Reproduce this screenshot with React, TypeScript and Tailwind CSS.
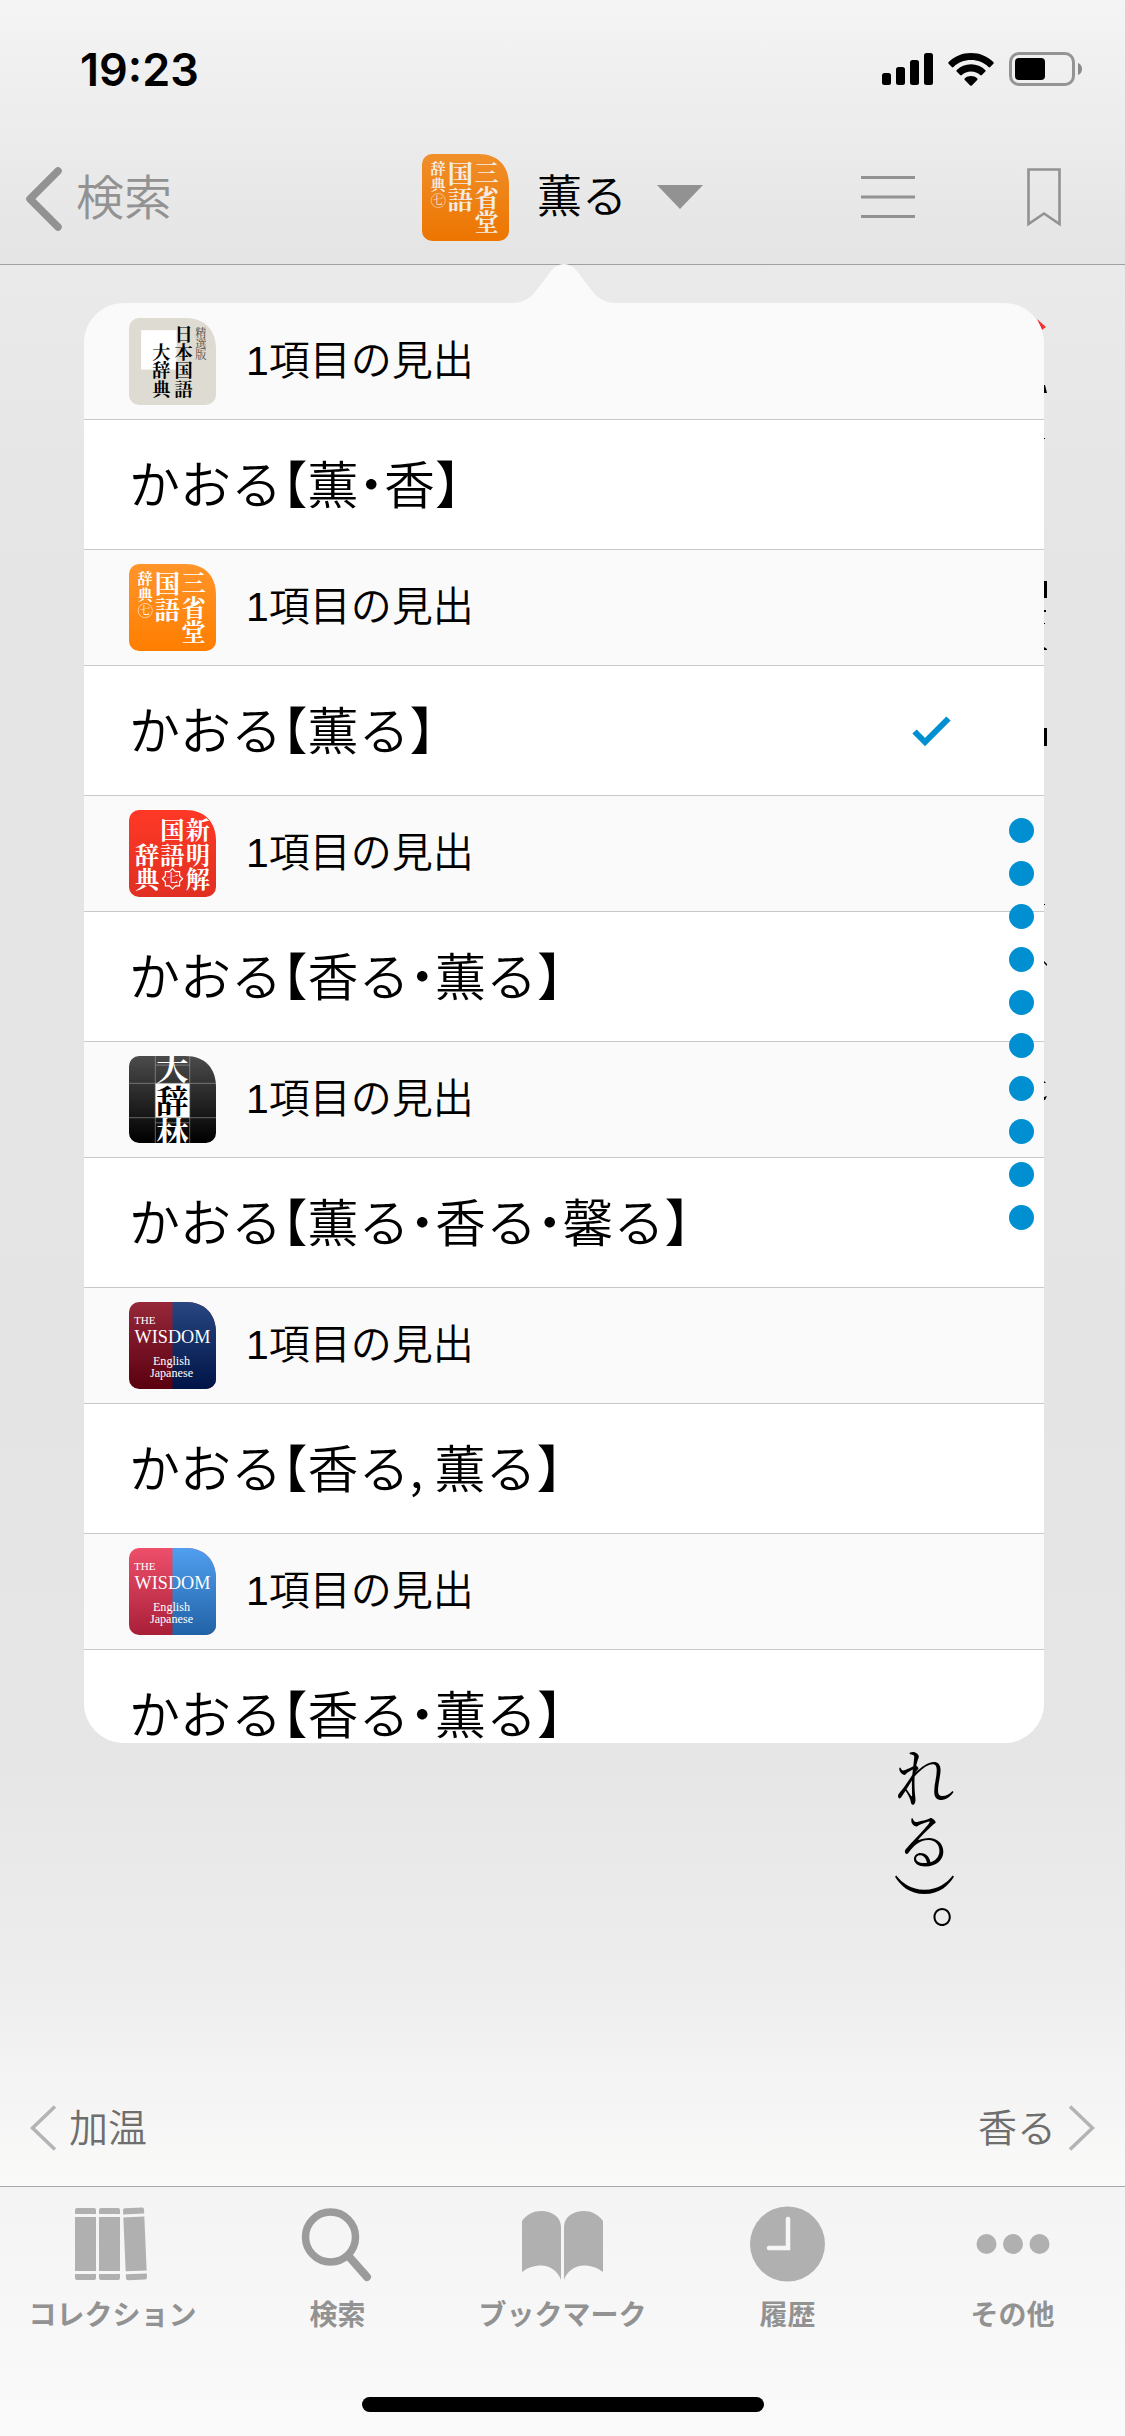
import { ReactNode } from "react"

type VerticalTextProps = {
    text: string,
    x: number,
    y: number,
    size: number,
    fill: string,
    weight?: number,
}

// x is the centre of the column, y is the top of the first character
const VerticalText = ({text,x,y,size,fill,weight = 700} : VerticalTextProps) => {
    return(
        <text x={x} y={y} fontSize={size} fontWeight={weight} fill={fill} className="[writing-mode:vertical-rl]">{text}</text>
    )
}

type CoverProps = {
    id: string,
    from: string,
    to: string,
    children: ReactNode,
}

const Cover = ({id,from,to,children} : CoverProps) => {
    return(
        <svg viewBox="0 0 86 86" className="size-[87px] shrink-0 font-['Noto_Serif_CJK_JP','Noto_Sans_CJK_JP',serif]" aria-hidden="true">
            <defs>
                <linearGradient id={`${id}-fill`} x1="0" y1="0" x2="0" y2="1">
                    <stop offset="0" stopColor={from} />
                    <stop offset="1" stopColor={to} />
                </linearGradient>
                <clipPath id={`${id}-clip`}>
                    <path d="M10 0H56C75 0 86 12 86 31V76A10 10 0 0 1 76 86H10A10 10 0 0 1 0 76V10A10 10 0 0 1 10 0Z" />
                </clipPath>
            </defs>
            <g clipPath={`url(#${id}-clip)`}>
                <rect width="86" height="86" fill={`url(#${id}-fill)`} />
                {children}
            </g>
        </svg>
    )
}

const NikkokuCover = () => (
    <Cover id="nikkoku" from="#dedcd2" to="#dedcd2">
        <rect x="12" y="12" width="35" height="39" fill="#fff" />
        <VerticalText text="日本国語" x={54} y={7} size={18} fill="#000" />
        <VerticalText text="大辞典" x={32} y={25} size={18} fill="#000" />
        <VerticalText text="精選版" x={71} y={9} size={11} fill="#444" weight={400} />
    </Cover>
)

const SankokuCover = ({id,from,to,ink} : {id: string, from: string, to: string, ink: string}) => (
    <Cover id={id} from={from} to={to}>
        <VerticalText text="三省堂" x={64} y={7} size={24} fill={ink} />
        <VerticalText text="国語" x={38} y={7} size={25} fill={ink} />
        <VerticalText text="辞典" x={16} y={7} size={15} fill={ink} />
        <circle cx="16" cy="46" r="7" fill="none" stroke={ink} strokeWidth="0.7" opacity="0.8" />
        <VerticalText text="七" x={16} y={41} size={10} fill={ink} weight={400} />
    </Cover>
)

const ShinmeikaiCover = () => (
    <Cover id="shinmeikai" from="#ff3826" to="#e03022">
        <VerticalText text="新明解" x={68} y={8} size={24} fill="#fff" />
        <VerticalText text="国語" x={43} y={8} size={24} fill="#fff" />
        <VerticalText text="辞典" x={18} y={32} size={24} fill="#fff" />
        <path d="M43 58L46 61L50 61L50 65L53 68L50 71L50 75L46 75L43 78L40 75L36 75L36 71L33 68L36 65L36 61L40 61Z" fill="none" stroke="#fff" strokeWidth="1.2" />
        <VerticalText text="七" x={43} y={62} size={12} fill="#fff" weight={400} />
    </Cover>
)

const DaijirinCover = () => (
    <Cover id="daijirin" from="#4c4c4c" to="#000">
        <rect x="26" y="27" width="34" height="34" fill="#fff" />
        <path d="M26 0V86M60 0V86M0 27H86M0 61H86M26 9H60M26 66H60" stroke="#aaa" strokeWidth="0.8" opacity="0.7" />
        <VerticalText text="大" x={43} y={-4} size={32} fill="#fff" />
        <VerticalText text="辞" x={43} y={28} size={32} fill="#000" />
        <VerticalText text="林" x={43} y={60} size={32} fill="#fff" />
    </Cover>
)

type WisdomCoverProps = {
    id: string,
    from: string,
    to: string,
    rightFrom: string,
    rightTo: string,
}

const WisdomCover = ({id,from,to,rightFrom,rightTo} : WisdomCoverProps) => (
    <Cover id={id} from={from} to={to}>
        <linearGradient id={`${id}-right`} x1="0" y1="0" x2="0" y2="1">
            <stop offset="0" stopColor={rightFrom} />
            <stop offset="1" stopColor={rightTo} />
        </linearGradient>
        <rect x="43" width="43" height="86" fill={`url(#${id}-right)`} />
        <g fill="#fff" fontFamily="'Liberation Serif', serif">
            <text x="5" y="22" fontSize="11">THE</text>
            <text x="43" y="41" fontSize="18" textAnchor="middle">WISDOM</text>
            <text x="42" y="62" fontSize="12" textAnchor="middle">English</text>
            <text x="42" y="74" fontSize="12" textAnchor="middle">Japanese</text>
        </g>
    </Cover>
)

type Section = {
    id: string,
    cover: ReactNode,
    headword: string,
    selected?: boolean,
}

const sections: Section[] = [
    { id: "nikkoku", cover: <NikkokuCover />, headword: "かおる【薫・香】" },
    { id: "sankoku", cover: <SankokuCover id="sankoku" from="#ff952a" to="#ff7e00" ink="#fff" />, headword: "かおる【薫る】", selected: true },
    { id: "shinmeikai", cover: <ShinmeikaiCover />, headword: "かおる【香る・薫る】" },
    { id: "daijirin", cover: <DaijirinCover />, headword: "かおる【薫る・香る・馨る】" },
    { id: "wisdom-dark", cover: <WisdomCover id="wisdom-dark" from="#96283a" to="#5a000f" rightFrom="#284682" rightTo="#001446" />, headword: "かおる【香る, 薫る】" },
    { id: "wisdom-light", cover: <WisdomCover id="wisdom-light" from="#ee4f6b" to="#a91f38" rightFrom="#519ff0" rightTo="#2062a6" />, headword: "かおる【香る・薫る】" },
]

const StatusBar = () => {
    return(
        <div className="flex h-32 items-center justify-between pt-2.5 pr-[42px] pl-20">
            <span className="font-[Inter,sans-serif] text-[45px] leading-none font-semibold text-black">19:23</span>
            <div className="flex items-center gap-[15px]">
                <svg viewBox="0 0 51 32" className="h-8 w-[51px]" aria-hidden="true">
                    <rect x="0" y="20" width="9" height="12" rx="2.5" />
                    <rect x="14" y="14" width="9" height="18" rx="2.5" />
                    <rect x="28" y="7" width="9" height="25" rx="2.5" />
                    <rect x="42" y="0" width="9" height="32" rx="2.5" />
                </svg>
                <svg viewBox="0 0 46 33" className="h-[33px] w-[46px]" aria-hidden="true">
                    <path d="M23 0C31.8 0 39.6 3.4 45.3 9C45.9 9.6 45.9 10.2 45.4 10.8L42.2 14C41.7 14.5 41.1 14.5 40.5 14C35.9 9.7 29.8 7.1 23 7.1S10.1 9.7 5.5 14C4.9 14.5 4.3 14.5 3.8 14L.6 10.8C.1 10.2 .1 9.6 .7 9C6.4 3.4 14.2 0 23 0Z" />
                    <path d="M23 11.2C28.6 11.2 33.5 13.3 37.2 16.9C37.8 17.5 37.8 18.1 37.3 18.6L33.9 22C33.4 22.5 32.8 22.5 32.2 22C29.8 19.8 26.6 18.4 23 18.4S16.2 19.8 13.8 22C13.2 22.5 12.6 22.5 12.1 22L8.7 18.6C8.2 18.1 8.2 17.5 8.8 16.9C12.5 13.3 17.4 11.2 23 11.2Z" />
                    <path d="M23 23C25.4 23 27.5 23.8 29.1 25.2C29.7 25.7 29.7 26.3 29.2 26.9L23.8 32.4C23.3 32.9 22.7 32.9 22.2 32.4L16.8 26.9C16.3 26.3 16.3 25.7 16.9 25.2C18.5 23.8 20.6 23 23 23Z" />
                </svg>
                <svg viewBox="0 0 74 34" className="h-[34px] w-[74px]" aria-hidden="true">
                    <rect x="1.5" y="1.5" width="63" height="31" rx="8.5" fill="none" stroke="#949494" strokeWidth="3" />
                    <rect x="6" y="6" width="30" height="22" rx="4" />
                    <path d="M69 11V23C72 22 73 19.5 73 17S72 12 69 11Z" fill="#8a8a8a" />
                </svg>
            </div>
        </div>
    )
}

const NavBar = () => {
    return(
        <nav className="grid h-[136px] grid-cols-[1fr_auto_1fr] items-center px-[25px] pt-0.5 text-[#929292]">
            <button className="mt-1 flex items-center gap-3.5 justify-self-start text-5xl leading-none font-[350]">
                <svg viewBox="0 0 37 64" className="h-16 w-[37px]" aria-hidden="true">
                    <path d="M33 4L5 32L33 60" fill="none" stroke="currentColor" strokeWidth="7.5" strokeLinecap="round" strokeLinejoin="round" />
                </svg>
                検索
            </button>
            <button className="flex items-center">
                <SankokuCover id="current" from="#f08f2a" to="#ed7500" ink="#f4ece4" />
                <span className="ml-7 text-[45px] leading-none font-[350] text-black">薫る</span>
                <svg viewBox="0 0 46 24" className="ml-[30px] h-6 w-[46px]" aria-hidden="true">
                    <path d="M0 0H46L23 24Z" fill="currentColor" />
                </svg>
            </button>
            <div className="flex items-center gap-28 justify-self-end pr-[39px]">
                <button aria-label="目次">
                    <svg viewBox="0 0 54 42" className="block h-[42px] w-[54px]">
                        <path d="M0 1.5H54M0 21H54M0 40.5H54" stroke="currentColor" strokeWidth="3" />
                    </svg>
                </button>
                <button aria-label="ブックマークに追加">
                    <svg viewBox="0 0 34 59" className="block h-[59px] w-[34px]">
                        <path d="M1.5 1.5H32.5V56L17 45.5L1.5 56Z" fill="none" stroke="currentColor" strokeWidth="2.6" />
                    </svg>
                </button>
            </div>
        </nav>
    )
}

const HeadwordPopover = () => {
    return(
        <div className="absolute top-[38px] right-[81px] bottom-[443px] left-[84px]">
            <svg viewBox="0 0 104 40" className="absolute bottom-full left-1/2 -mb-px h-10 w-[104px] -translate-x-1/2" aria-hidden="true">
                <path d="M0 39C14 39 20 32 27 23L39 7Q45 0 52 0T65 7L77 23C84 32 90 39 104 39V40H0Z" fill="#fafafa" />
            </svg>
            <ul className="h-full overflow-hidden rounded-[40px] bg-[#fafafa] pt-px">
                {sections.map((section) => (
                    <li key={section.id}>
                        <div className="flex h-[116px] items-center gap-[30px] border-b border-[#c8c8c8] bg-[#fafafa] px-[45px]">
                            {section.cover}
                            <h2 className="text-[41px] leading-none font-[350] text-black">1項目の見出</h2>
                        </div>
                        <button className="flex h-[130px] w-full items-center justify-between border-b border-[#c8c8c8] bg-white pt-0.5 pr-[93px] pl-[45px] text-left">
                            <span className="mb-1.5 font-['Noto_Sans_CJK_JP',sans-serif] text-[51px] leading-none font-[350] whitespace-nowrap text-black [font-feature-settings:'halt']">{section.headword}</span>
                            {section.selected && (
                                <svg viewBox="0 0 39 31" className="h-[31px] w-[39px]" aria-label="選択中">
                                    <path d="M2.5 15.5L13 26L36.5 2.5" fill="none" stroke="#008fd0" strokeWidth="6" />
                                </svg>
                            )}
                        </button>
                    </li>
                ))}
            </ul>
            <div className="absolute inset-y-0 right-2.5 flex flex-col justify-center gap-[18px] pt-0.5">
                {Array.from({length: 10},(_,index) => (
                    <span key={index} className="size-[25px] rounded-full bg-[#008fd0]" />
                ))}
            </div>
        </div>
    )
}

// edges of the vertical article that stick out beside the popover
const ArticleEdge = () => {
    return(
        <svg viewBox="0 0 12 800" className="absolute top-[54px] right-[76px] h-[800px] w-3" aria-hidden="true">
            <path d="M0 0L9 8L5 11Z" fill="#f03232" />
            <path d="M7 66H8L10 74H7ZM7 119H8V120H7ZM7 262H10V279H7ZM7 291H9V293H7ZM7 304H8V305H7ZM7 328L10 330V331H7ZM7 409H10V427H7ZM7 585H8V586H7ZM7 642L10 645V647L7 644ZM7 762L9 764H7ZM7 778L10 777L8 781H7Z" />
        </svg>
    )
}

const Pager = () => {
    return(
        <div className="flex h-[118px] items-center justify-between px-[30px] pt-0.5 text-[39px] leading-none font-[350] text-[#6e6e6e]">
            <button className="flex items-center gap-3">
                <svg viewBox="0 0 27 46" className="h-[46px] w-[27px]" aria-hidden="true">
                    <path d="M25 1.5L2.5 23L25 44.5" fill="none" stroke="#b4b4b4" strokeWidth="3.6" />
                </svg>
                加温
            </button>
            <button className="flex items-center gap-3">
                香る
                <svg viewBox="0 0 27 46" className="h-[46px] w-[27px]" aria-hidden="true">
                    <path d="M2 1.5L24.5 23L2 44.5" fill="none" stroke="#b4b4b4" strokeWidth="3.6" />
                </svg>
            </button>
        </div>
    )
}

const tabs: { label: string, icon: ReactNode }[] = [
    {
        label: "コレクション",
        icon: (
            <g fill="#b0b0b0">
                <path d="M0 8V4Q0 2 2 2H19Q21 2 21 4V8ZM0 11H21V65H0ZM0 68H21V72Q21 74 19 74H2Q0 74 0 72Z" />
                <path d="M24 8V4Q24 2 26 2H43Q45 2 45 4V8ZM24 11H45V65H24ZM24 68H45V72Q45 74 43 74H26Q24 74 24 72Z" />
                <path d="M48 8V4Q48 2 50 2H67Q69 2 69 4V8ZM48 11H69V65H48ZM48 68H69V72Q69 74 67 74H50Q48 74 48 72Z" transform="rotate(-2.5 58.5 38) translate(1.5 0)" />
            </g>
        ),
    },
    {
        label: "検索",
        icon: (
            <g fill="none" stroke="#9b9b9b">
                <circle cx="30.5" cy="31" r="25" strokeWidth="7.5" />
                <path d="M48.5 50L67 71" strokeWidth="8" strokeLinecap="round" />
            </g>
        ),
    },
    {
        label: "ブックマーク",
        icon: (
            <g fill="#b0b0b0">
                <path d="M-3 15C2 8 9 5 16 5C27 5 36 11 36 21V74C33 65 25 59.5 16 59.5C9 59.5 2 62 -2 65.5Q-3 66 -3 65Z" />
                <path d="M78 15C73 8 66 5 59 5C48 5 39 11 39 21V74C42 65 50 59.5 59 59.5C66 59.5 73 62 77 65.5Q78 66 78 65Z" />
            </g>
        ),
    },
    {
        label: "履歴",
        icon: (
            <>
                <circle cx="37.5" cy="38" r="37.5" fill="#b0b0b0" />
                <path d="M38 13V42H19" fill="none" stroke="#f6f6f6" strokeWidth="4.5" strokeLinecap="round" />
            </>
        ),
    },
    {
        label: "その他",
        icon: (
            <g fill="#b0b0b0">
                <circle cx="11.5" cy="38" r="10" />
                <circle cx="38" cy="38" r="10" />
                <circle cx="64.5" cy="38" r="10" />
            </g>
        ),
    },
]

const TabBar = () => {
    return(
        <footer className="border-t border-[#a8a8a8] bg-linear-to-b from-[#f4f4f5] to-[#fafafa]">
            <nav className="grid grid-cols-5 pt-[19px]">
                {tabs.map((tab) => (
                    <button key={tab.label} className="flex flex-col items-center gap-5 text-[28px] leading-7 font-bold text-[#929292]">
                        <svg viewBox="0 0 76 76" className="size-[76px] overflow-visible" aria-hidden="true">{tab.icon}</svg>
                        {tab.label}
                    </button>
                ))}
            </nav>
            <div className="mx-auto mt-[67px] mb-6 h-[15px] w-[402px] rounded-full bg-black" />
        </footer>
    )
}

export default function App() {
    return(
        <div className="flex min-h-screen flex-col font-['Liberation_Sans','Noto_Sans_CJK_JP',sans-serif]" lang="ja">
            <header className="border-b border-[#a0a0a0] bg-linear-to-b from-[#f4f4f4] to-[#e4e4e4]">
                <StatusBar />
                <NavBar />
            </header>
            <main className="relative flex flex-1 flex-col bg-[linear-gradient(to_bottom,#eaeaea,#e5e5e5_15%,#e4e4e4_60%,#e6e6e6_77%,#ececec_88%,#f4f4f4_95%,#fafaf9)]">
                <ArticleEdge />
                <article className="flex flex-1 items-end justify-end pr-[169px] pb-[133px]">
                    <p className="font-['Noto_Serif_CJK_JP','Noto_Sans_CJK_JP',serif] text-[63px] leading-none font-normal text-black [font-feature-settings:'vhal'] [writing-mode:vertical-rl]">れる）。</p>
                </article>
                <Pager />
                <HeadwordPopover />
            </main>
            <TabBar />
        </div>
    )
}
